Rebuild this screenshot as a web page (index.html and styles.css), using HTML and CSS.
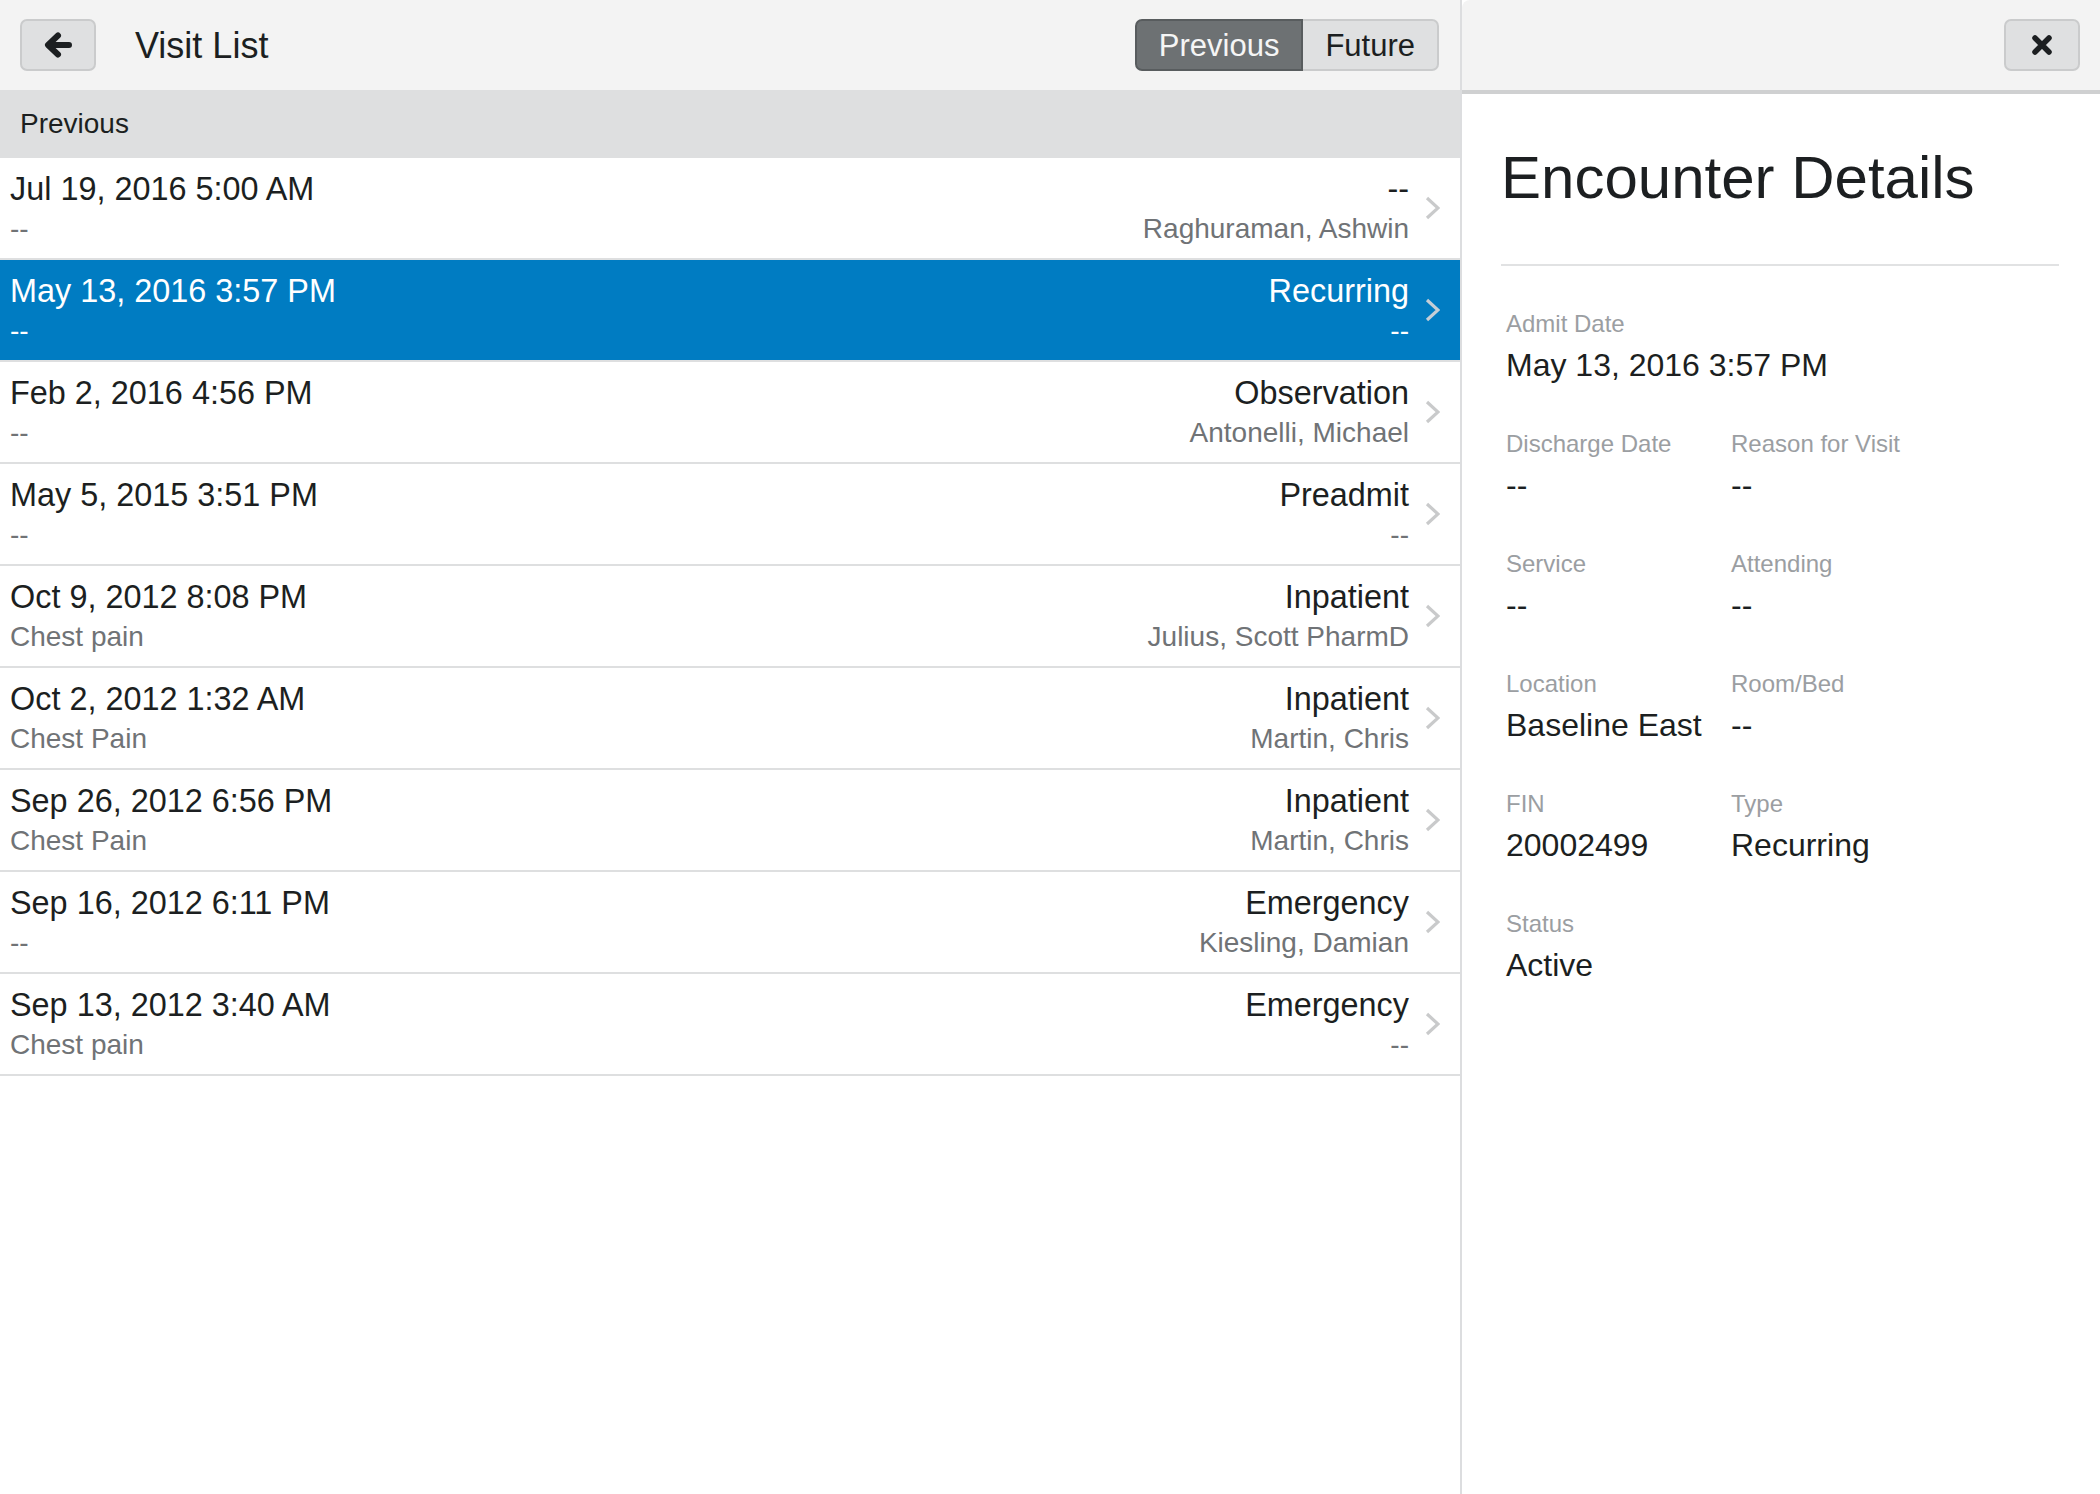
FILE: index.html
```html
<!DOCTYPE html>
<html>
<head>
<meta charset="utf-8">
<title>Visit List</title>
<link rel="stylesheet" href="styles.css">
</head>
<body>
<div class="app">
  <section class="list-panel">
    <header class="bar">
      <button class="icon-btn" aria-label="Back">
        <svg width="30" height="30" viewBox="0 0 30 30"><path d="M26 15H6M15 5.5L5 15l10 9.5" fill="none" stroke="#1c1f21" stroke-width="6" stroke-linecap="round" stroke-linejoin="round"/></svg>
      </button>
      <h1 class="bar-title">Visit List</h1>
      <div class="segmented">
        <button class="seg seg-active">Previous</button>
        <button class="seg">Future</button>
      </div>
    </header>
    <div class="band">Previous</div>
    <ul class="rows">
      <li class="row"><div class="col-left"><div class="primary">Jul 19, 2016 5:00 AM</div><div class="secondary">--</div></div><div class="col-right"><div class="primary">--</div><div class="secondary">Raghuraman, Ashwin</div></div><svg class="chev" width="15" height="24" viewBox="0 0 15 24"><path d="M2 2l11 10L2 22" fill="none" stroke-width="3.2"/></svg></li>
      <li class="row selected"><div class="col-left"><div class="primary">May 13, 2016 3:57 PM</div><div class="secondary">--</div></div><div class="col-right"><div class="primary">Recurring</div><div class="secondary">--</div></div><svg class="chev" width="15" height="24" viewBox="0 0 15 24"><path d="M2 2l11 10L2 22" fill="none" stroke-width="3.2"/></svg></li>
      <li class="row"><div class="col-left"><div class="primary">Feb 2, 2016 4:56 PM</div><div class="secondary">--</div></div><div class="col-right"><div class="primary">Observation</div><div class="secondary">Antonelli, Michael</div></div><svg class="chev" width="15" height="24" viewBox="0 0 15 24"><path d="M2 2l11 10L2 22" fill="none" stroke-width="3.2"/></svg></li>
      <li class="row"><div class="col-left"><div class="primary">May 5, 2015 3:51 PM</div><div class="secondary">--</div></div><div class="col-right"><div class="primary">Preadmit</div><div class="secondary">--</div></div><svg class="chev" width="15" height="24" viewBox="0 0 15 24"><path d="M2 2l11 10L2 22" fill="none" stroke-width="3.2"/></svg></li>
      <li class="row"><div class="col-left"><div class="primary">Oct 9, 2012 8:08 PM</div><div class="secondary">Chest pain</div></div><div class="col-right"><div class="primary">Inpatient</div><div class="secondary">Julius, Scott PharmD</div></div><svg class="chev" width="15" height="24" viewBox="0 0 15 24"><path d="M2 2l11 10L2 22" fill="none" stroke-width="3.2"/></svg></li>
      <li class="row"><div class="col-left"><div class="primary">Oct 2, 2012 1:32 AM</div><div class="secondary">Chest Pain</div></div><div class="col-right"><div class="primary">Inpatient</div><div class="secondary">Martin, Chris</div></div><svg class="chev" width="15" height="24" viewBox="0 0 15 24"><path d="M2 2l11 10L2 22" fill="none" stroke-width="3.2"/></svg></li>
      <li class="row"><div class="col-left"><div class="primary">Sep 26, 2012 6:56 PM</div><div class="secondary">Chest Pain</div></div><div class="col-right"><div class="primary">Inpatient</div><div class="secondary">Martin, Chris</div></div><svg class="chev" width="15" height="24" viewBox="0 0 15 24"><path d="M2 2l11 10L2 22" fill="none" stroke-width="3.2"/></svg></li>
      <li class="row"><div class="col-left"><div class="primary">Sep 16, 2012 6:11 PM</div><div class="secondary">--</div></div><div class="col-right"><div class="primary">Emergency</div><div class="secondary">Kiesling, Damian</div></div><svg class="chev" width="15" height="24" viewBox="0 0 15 24"><path d="M2 2l11 10L2 22" fill="none" stroke-width="3.2"/></svg></li>
      <li class="row"><div class="col-left"><div class="primary">Sep 13, 2012 3:40 AM</div><div class="secondary">Chest pain</div></div><div class="col-right"><div class="primary">Emergency</div><div class="secondary">--</div></div><svg class="chev" width="15" height="24" viewBox="0 0 15 24"><path d="M2 2l11 10L2 22" fill="none" stroke-width="3.2"/></svg></li>
    </ul>
  </section>
  <section class="detail-panel">
    <header class="bar detail-bar">
      <button class="icon-btn" aria-label="Close">
        <svg width="22" height="22" viewBox="0 0 22 22"><path d="M4 4l14 14M18 4L4 18" fill="none" stroke="#1c1f21" stroke-width="5.5" stroke-linecap="round"/></svg>
      </button>
    </header>
    <div class="detail-body">
      <h2 class="detail-title">Encounter Details</h2>
      <div class="fields">
        <div class="field span2"><div class="label">Admit Date</div><div class="value">May 13, 2016 3:57 PM</div></div>
        <div class="field"><div class="label">Discharge Date</div><div class="value">--</div></div>
        <div class="field"><div class="label">Reason for Visit</div><div class="value">--</div></div>
        <div class="field"><div class="label">Service</div><div class="value">--</div></div>
        <div class="field"><div class="label">Attending</div><div class="value">--</div></div>
        <div class="field"><div class="label">Location</div><div class="value">Baseline East</div></div>
        <div class="field"><div class="label">Room/Bed</div><div class="value">--</div></div>
        <div class="field"><div class="label">FIN</div><div class="value">20002499</div></div>
        <div class="field"><div class="label">Type</div><div class="value">Recurring</div></div>
        <div class="field"><div class="label">Status</div><div class="value">Active</div></div>
      </div>
    </div>
  </section>
</div>
</body>
</html>
```

FILE: styles.css
```css
* { box-sizing: border-box; }

html, body {
  margin: 0;
  padding: 0;
  background: #ffffff;
  font-family: "Liberation Sans", Arial, Helvetica, sans-serif;
  color: #1c1f21;
}

.app {
  display: flex;
  height: 1494px;
}

.list-panel {
  width: 1462px;
  flex: none;
  border-right: 2px solid #dcdddf;
  display: flex;
  flex-direction: column;
}

.bar {
  height: 90px;
  flex: none;
  background: #f3f3f3;
  display: flex;
  align-items: center;
  padding: 0 21px 0 20px;
}

.icon-btn {
  width: 76px;
  height: 52px;
  border: 2px solid #cacbcc;
  border-radius: 7px;
  background: #dfe0e1;
  display: flex;
  align-items: center;
  justify-content: center;
  padding: 0;
  margin: 0;
}

.bar-title {
  margin: 0 0 0 39px;
  padding-top: 2px;
  font-size: 36px;
  font-weight: normal;
  line-height: 44px;
  flex: 1;
}

.segmented {
  display: flex;
  height: 52px;
}

.seg {
  font-family: inherit;
  font-size: 31px;
  height: 52px;
  margin: 0;
  padding: 2px 22px 0;
  background: #dfe0e1;
  color: #1c1f21;
  border: 2px solid #cacbcc;
  border-left: none;
  border-radius: 0 7px 7px 0;
}

.seg-active {
  background: #6d7173;
  color: #f5f5f5;
  border: 2px solid #585c5e;
  border-radius: 7px 0 0 7px;
}

.band {
  height: 68px;
  flex: none;
  background: #dedfe0;
  display: flex;
  align-items: center;
  padding-left: 20px;
  font-size: 28px;
}

.rows {
  list-style: none;
  margin: 0;
  padding: 0;
}

.row {
  height: 102px;
  display: flex;
  align-items: center;
  padding: 0 20px 0 10px;
  border-bottom: 2px solid #dedfe0;
}

.col-left, .col-right {
  align-self: stretch;
  padding-top: 11px;
}

.col-left { flex: 1; }
.col-right { text-align: right; }

.primary {
  font-size: 32.4px;
  line-height: 40px;
  white-space: nowrap;
}

.secondary {
  font-size: 28px;
  line-height: 40px;
  color: #707376;
  white-space: nowrap;
}

.chev {
  flex: none;
  margin-left: 16px;
  stroke: #c9cacb;
}

.row.selected {
  background: #007cc2;
}

.row.selected .primary,
.row.selected .secondary {
  color: #ffffff;
}

.row.selected .chev {
  stroke: #c5ced6;
}

.detail-panel {
  flex: 1;
  display: flex;
  flex-direction: column;
}

.detail-bar {
  justify-content: flex-end;
  border-bottom: 4px solid #cfd0d1;
  height: 94px;
  padding-bottom: 0;
  padding-right: 20px;
  border-top-left-radius: 8px;
}

.detail-body {
  padding: 0 41px;
}

.detail-title {
  margin: 48px 0 0 -2px;
  padding-bottom: 50px;
  font-size: 60px;
  font-weight: normal;
  line-height: 72px;
  border-bottom: 2px solid #e1e2e3;
}

.fields {
  display: grid;
  grid-template-columns: 225px 1fr;
  row-gap: 44px;
  margin-top: 43px;
  padding-left: 3px;
}

.field.span2 { grid-column: span 2; }

.label {
  font-size: 24px;
  line-height: 30px;
  color: #9b9ea2;
}

.value {
  margin-top: 6px;
  font-size: 32px;
  line-height: 40px;
  white-space: nowrap;
}
```
